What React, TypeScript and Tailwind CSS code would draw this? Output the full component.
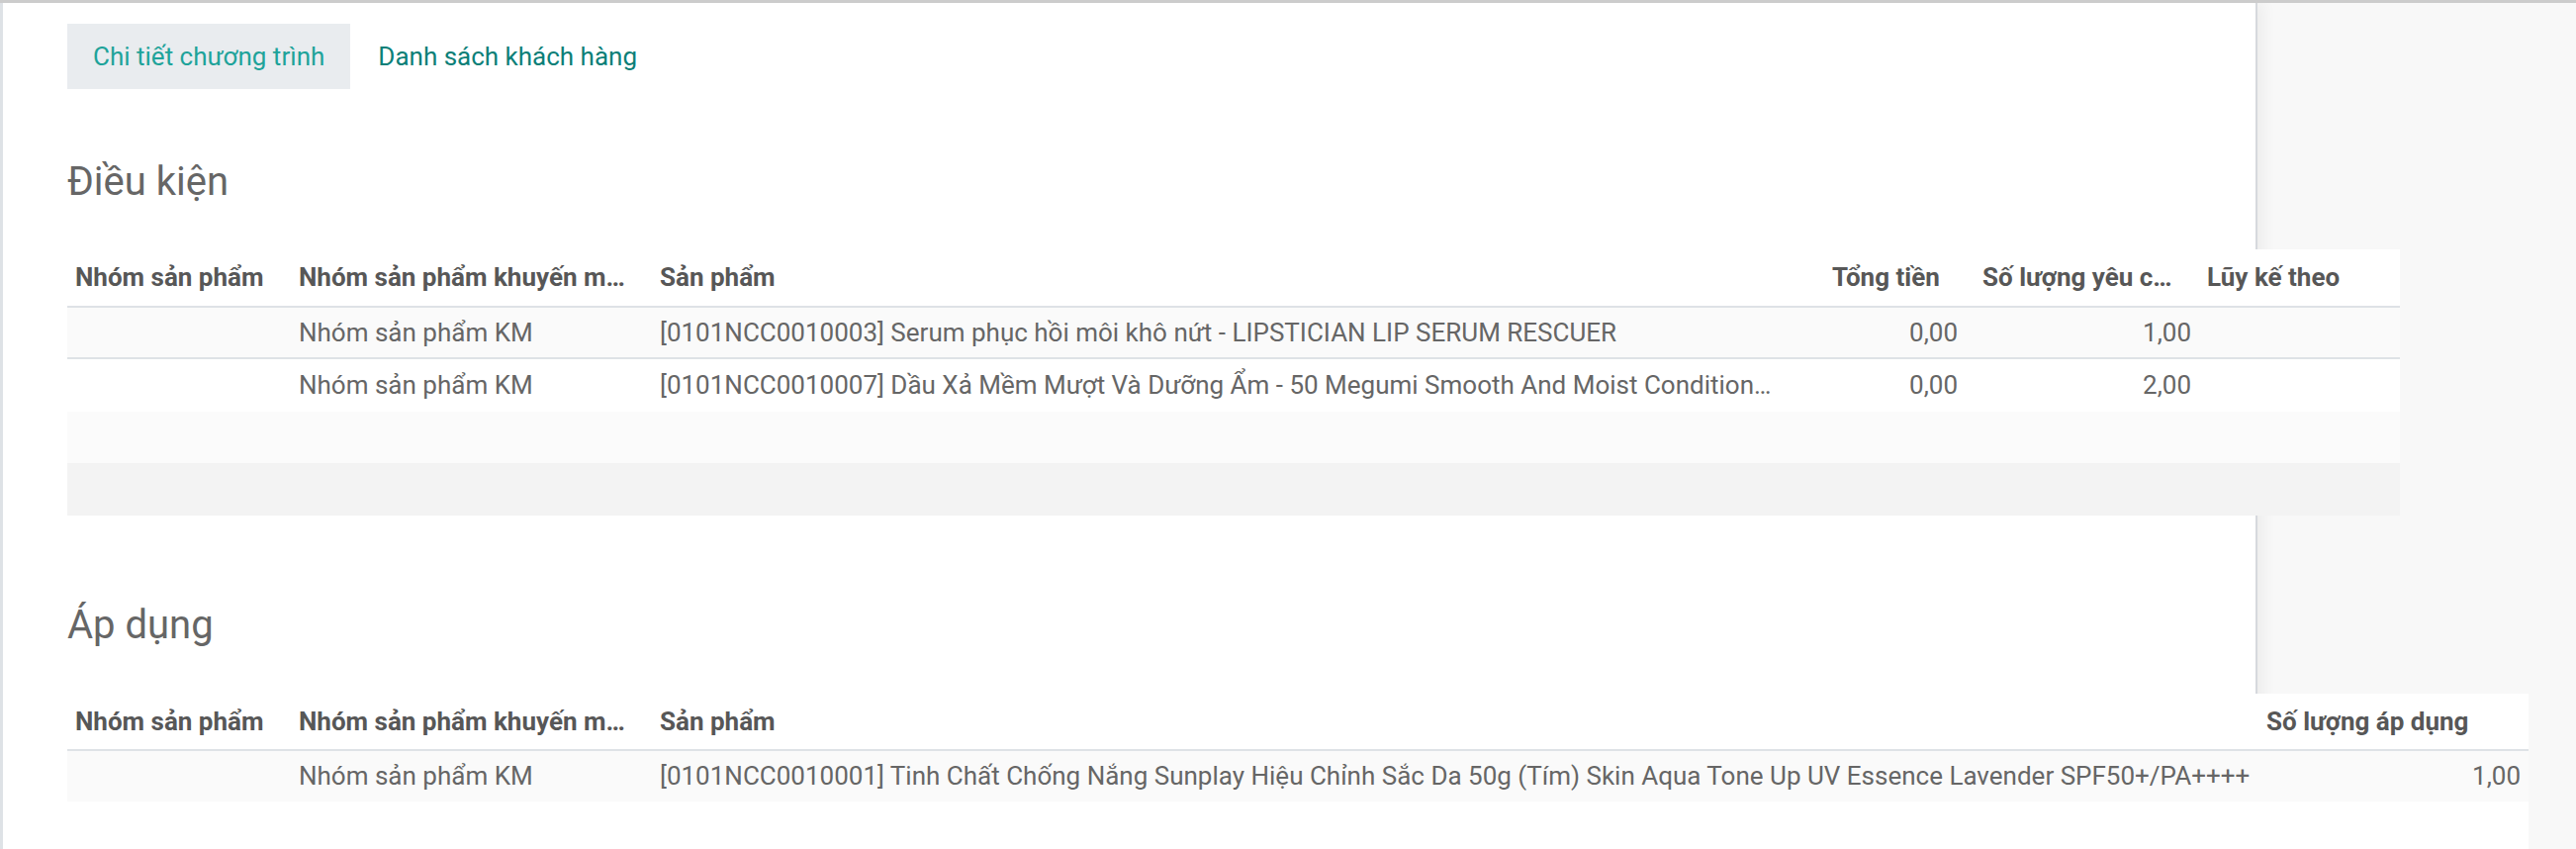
import React from 'react'

const conditionRows = [
  {
    group: 'Nhóm sản phẩm KM',
    product: '[0101NCC0010003] Serum phục hồi môi khô nứt - LIPSTICIAN LIP SERUM RESCUER',
    total: '0,00',
    qty: '1,00',
  },
  {
    group: 'Nhóm sản phẩm KM',
    product: '[0101NCC0010007] Dầu Xả Mềm Mượt Và Dưỡng Ẩm - 50 Megumi Smooth And Moist Condition…',
    total: '0,00',
    qty: '2,00',
  },
]

const App = () => {
  return (
    <div className="w-[2604px] h-[858px] overflow-hidden flex bg-[#f8f8f8] border-t-[3px] border-[#cccccc] font-['Roboto',sans-serif]">
      <div className="w-[2282px] shrink-0 h-full bg-white border-l-[3px] border-l-[#dee2e6] border-r-2 border-r-[#d6d9dd] shadow-[6px_0_14px_rgba(0,0,0,0.05)] pl-[65px] pt-[21px]">
        {/* tabs */}
        <div className="flex h-[66px] text-[26px]">
          <div className="flex items-center px-[26px] bg-[#e9ecef] text-[#1ea39a]">Chi tiết chương trình</div>
          <div className="flex items-center px-[28px] text-[#0c7f78]">Danh sách khách hàng</div>
        </div>

        <h2 className="mt-[70px] h-[48px] leading-[48px] text-[40px] font-normal text-[#666666]">Điều kiện</h2>

        <table className="mt-[44px] w-[2358px] table-fixed bg-white text-[26px] text-[#666666]">
          <colgroup>
            <col className="w-[226px]" />
            <col className="w-[365px]" />
            <col className="w-[1185px]" />
            <col className="w-[152px]" />
            <col className="w-[227px]" />
            <col className="w-[203px]" />
          </colgroup>
          <thead>
            <tr className="h-[58px] border-b-2 border-[#dee2e6] text-[#575757]">
              <th className="pl-2 text-left font-bold whitespace-nowrap">Nhóm sản phẩm</th>
              <th className="pl-2 text-left font-bold whitespace-nowrap">Nhóm sản phẩm khuyến m…</th>
              <th className="pl-2 text-left font-bold whitespace-nowrap">Sản phẩm</th>
              <th className="pl-2 text-left font-bold whitespace-nowrap">Tổng tiền</th>
              <th className="pl-2 text-left font-bold whitespace-nowrap">Số lượng yêu c…</th>
              <th className="pl-2 text-left font-bold whitespace-nowrap">Lũy kế theo</th>
            </tr>
          </thead>
          <tbody>
            {conditionRows.map((r, i) => (
              <tr
                key={i}
                className={i === 0 ? 'h-[52px] bg-[#fafafa] border-b-2 border-[#dee2e6]' : 'h-[54px] bg-white'}
              >
                <td className="pl-2"></td>
                <td className="pl-2 whitespace-nowrap">{r.group}</td>
                <td className="pl-2 whitespace-nowrap overflow-hidden">{r.product}</td>
                <td className="pr-[17px] text-right">{r.total}</td>
                <td className="pr-2 text-right">{r.qty}</td>
                <td></td>
              </tr>
            ))}
            <tr className="h-[52px] bg-[#fbfbfb]">
              <td colSpan={6}></td>
            </tr>
          </tbody>
          <tfoot>
            <tr className="h-[53px] bg-[#f3f3f3]">
              <td colSpan={6}></td>
            </tr>
          </tfoot>
        </table>

        <h2 className="mt-[87px] h-[48px] leading-[48px] text-[40px] font-normal text-[#666666]">Áp dụng</h2>

        <div className="mt-[45px] w-[2488px] bg-white pb-[60px]">
          <table className="w-full table-fixed text-[26px] text-[#666666]">
            <colgroup>
              <col className="w-[226px]" />
              <col className="w-[365px]" />
              <col className="w-[1624px]" />
              <col className="w-[273px]" />
            </colgroup>
            <thead>
              <tr className="h-[57px] border-b-2 border-[#dee2e6] text-[#575757]">
                <th className="pl-2 text-left font-bold whitespace-nowrap">Nhóm sản phẩm</th>
                <th className="pl-2 text-left font-bold whitespace-nowrap">Nhóm sản phẩm khuyến m…</th>
                <th className="pl-2 text-left font-bold whitespace-nowrap">Sản phẩm</th>
                <th className="pl-2 text-left font-bold whitespace-nowrap">Số lượng áp dụng</th>
              </tr>
            </thead>
            <tbody>
              <tr className="h-[52px] bg-[#fafafa]">
                <td></td>
                <td className="pl-2 whitespace-nowrap">Nhóm sản phẩm KM</td>
                <td className="pl-2 whitespace-nowrap overflow-hidden">
                  [0101NCC0010001] Tinh Chất Chống Nắng Sunplay Hiệu Chỉnh Sắc Da 50g (Tím) Skin Aqua Tone Up UV Essence Lavender SPF50+/PA++++
                </td>
                <td className="pr-2 text-right">1,00</td>
              </tr>
            </tbody>
          </table>
        </div>
      </div>
    </div>
  )
}

export default App
